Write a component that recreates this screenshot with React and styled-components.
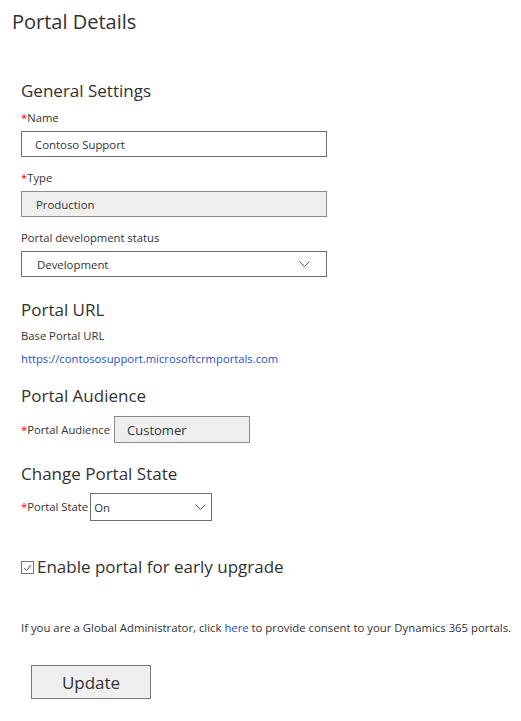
import React from "react";
import styled, { createGlobalStyle } from "styled-components";

const Global = createGlobalStyle`
  html, body { margin: 0; padding: 0; background: #fff; }
  body { font-family: "Segoe UI", "Open Sans", "Noto Sans", sans-serif; color: #333; }
`;

const Page = styled.div`
  width: 521px;
  padding: 8px 0 0 12px;
  box-sizing: border-box;
`;

const Title = styled.h1`
  margin: 0;
  font-size: 20px;
  font-weight: 400;
  line-height: 28px;
  color: #323130;
`;

const Content = styled.div`
  padding: 44px 0 0 9px;
`;

const Section = styled.section`
  display: flex;
  flex-direction: column;
  margin-top: ${(p) => p.$top || 0}px;
`;

const Heading = styled.h2`
  margin: 0 0 ${(p) => p.$mb ?? 8}px;
  font-size: 17px;
  font-weight: 400;
  line-height: 22px;
  color: #323130;
`;

const Label = styled.div`
  font-size: 11.25px;
  line-height: 18px;
  color: #333;
  margin: ${(p) => p.$m || "0 0 4px"};
  white-space: nowrap;
`;

const Req = styled.span`
  color: #e00;
`;

const Field = styled.div`
  width: ${(p) => p.$w || 306}px;
  height: ${(p) => p.$h || 26}px;
  box-sizing: border-box;
  border: 1px solid ${(p) => (p.$gray ? "#8a8a8a" : "#6e6e6e")};
  background: ${(p) => (p.$gray ? "#efefef" : "#fff")};
  display: flex;
  align-items: center;
  justify-content: space-between;
  padding: 0 ${(p) => p.$pr ?? 15}px 0 ${(p) => p.$pl ?? 13}px;
  font-size: ${(p) => p.$fs || 11.4}px;
  color: #333;
  margin-bottom: ${(p) => p.$mb ?? 12}px;
`;

const Inline = styled.div`
  display: flex;
  align-items: center;
  gap: ${(p) => p.$gap ?? 4}px;
`;

const Link = styled.a`
  color: #1f4fc6;
  text-decoration: none;
  font-size: 11.25px;
  line-height: 18px;
`;

const CheckRow = styled.label`
  display: flex;
  align-items: center;
  gap: 3px;
  font-size: 17px;
  line-height: 22px;
  color: #323130;
  margin-top: 35px;
`;

const Box = styled.span`
  width: 13px;
  height: 13px;
  box-sizing: border-box;
  border: 1px solid #777;
  display: inline-flex;
  align-items: center;
  justify-content: center;
  margin-top: 1px;
`;

const Note = styled.p`
  margin: 41px 0 0;
  font-size: 11.35px;
  line-height: 16px;
  color: #333;
  white-space: nowrap;
`;

const Button = styled.button`
  margin: 28px 0 0 10px;
  width: 120px;
  height: 34px;
  border: 1px solid #777;
  background: #efefef;
  font-family: inherit;
  font-size: 17px;
  color: #323130;
  display: flex;
  align-items: center;
  justify-content: center;
  padding: 0;
`;

const Chevron = () => (
  <svg width="11" height="6" viewBox="0 0 11 6">
    <path d="M0.5 0.5 L5.5 5.5 L10.5 0.5" fill="none" stroke="#555" strokeWidth="1" />
  </svg>
);

export default function App() {
  return (
    <>
      <Global />
      <Page>
        <Title>Portal Details</Title>
        <Content>
          <Section>
            <Heading $mb={7}>General Settings</Heading>
            <Label><Req>*</Req>Name</Label>
            <Field>Contoso Support</Field>
            <Label><Req>*</Req>Type</Label>
            <Field $gray $pl={14}>Production</Field>
            <Label $m="0 0 4px">Portal development status</Label>
            <Field $pl={15} $pr={16} $mb={0}>
              <span>Development</span>
              <Chevron />
            </Field>
          </Section>
          <Section $top={22}>
            <Heading $mb={6}>Portal URL</Heading>
            <Label $m="0 0 5px">Base Portal URL</Label>
            <Link href="#">https://contososupport.microsoftcrmportals.com</Link>
          </Section>
          <Section $top={17}>
            <Heading $mb={9}>Portal Audience</Heading>
            <Inline>
              <Label $m="0"><Req>*</Req>Portal Audience</Label>
              <Field $w={136} $h={27} $gray $pl={12} $fs={13} $mb={0}>Customer</Field>
            </Inline>
          </Section>
          <Section $top={20}>
            <Heading>Change Portal State</Heading>
            <Inline $gap={2}>
              <Label $m="0"><Req>*</Req>Portal State</Label>
              <Field $w={122} $h={28} $pl={3} $pr={5} $mb={0}>
                <span>On</span>
                <Chevron />
              </Field>
            </Inline>
          </Section>
          <CheckRow>
            <Box>
              <svg width="9" height="8" viewBox="0 0 9 8">
                <path d="M1 4 L3.5 6.5 L8 1" fill="none" stroke="#555" strokeWidth="1" />
              </svg>
            </Box>
            Enable portal for early upgrade
          </CheckRow>
          <Note>
            If you are a Global Administrator, click <Link href="#">here</Link> to provide consent to your Dynamics 365 portals.
          </Note>
          <Button>Update</Button>
        </Content>
      </Page>
    </>
  );
}
